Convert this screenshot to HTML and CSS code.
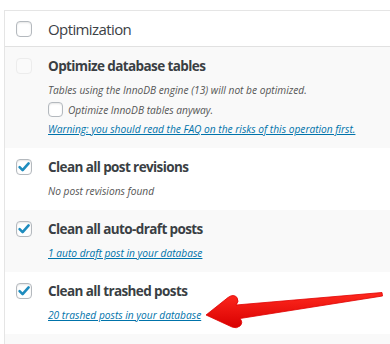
FILE: index.html
```html
<!DOCTYPE html>
<html>
<head>
<meta charset="utf-8">
<link rel="stylesheet" href="styles.css">
</head>
<body>
<div class="table">
  <div class="head">
    <span class="cb"></span>
    <span class="head-title">Optimization</span>
  </div>
  <div class="row alt">
    <span class="cb disabled"></span>
    <div class="content">
      <div class="title">Optimize database tables</div>
      <div class="desc">Tables using the InnoDB engine (13) will not be optimized.</div>
      <div class="desc inline"><span class="cb small"></span><span>Optimize InnoDB tables anyway.</span></div>
      <div class="desc"><a href="#">Warning: you should read the FAQ on the risks of this operation first.</a></div>
    </div>
  </div>
  <div class="row">
    <span class="cb checked"><svg viewBox="0 0 16 16"><path d="M3.6 8.2 L6.6 11.2 L12.6 4.4"/></svg></span>
    <div class="content">
      <div class="title">Clean all post revisions</div>
      <div class="desc">No post revisions found</div>
    </div>
  </div>
  <div class="row alt">
    <span class="cb checked"><svg viewBox="0 0 16 16"><path d="M3.6 8.2 L6.6 11.2 L12.6 4.4"/></svg></span>
    <div class="content">
      <div class="title">Clean all auto-draft posts</div>
      <div class="desc"><a href="#">1 auto draft post in your database</a></div>
    </div>
  </div>
  <div class="row">
    <span class="cb checked"><svg viewBox="0 0 16 16"><path d="M3.6 8.2 L6.6 11.2 L12.6 4.4"/></svg></span>
    <div class="content">
      <div class="title">Clean all trashed posts</div>
      <div class="desc"><a href="#">20 trashed posts in your database</a></div>
    </div>
  </div>
  <div class="row alt last"></div>
</div>
<svg class="arrow" width="390" height="344" viewBox="0 0 390 344">
  <defs>
    <linearGradient id="ag" x1="0" y1="0" x2="0" y2="1">
      <stop offset="0" stop-color="#ff2a1f"/>
      <stop offset="1" stop-color="#d80000"/>
    </linearGradient>
  </defs>
  <path d="M206 315 L228 297.5 Q233.5 293.5 237 297.5 Q239.5 301.5 236 305 L382 292.5 L382.5 296 L240 318.5 Q243.5 322.5 240 326 Q236.5 329 232 327 Z" fill="url(#ag)" stroke="#e00000" stroke-width="0.8" stroke-linejoin="round"/>
</svg>
</body>
</html>
```
FILE: styles.css
```css
html, body {
  margin: 0;
  padding: 0;
  background: #fff;
  overflow: hidden;
}
body {
  width: 390px;
  height: 344px;
  position: relative;
  font-family: "Open Sans", "Noto Sans", sans-serif;
  color: #32373c;
}
.table {
  margin: 10px -20px 0 4px;
  border-top: 1px solid #e5e5e5;
  border-left: 1px solid #e5e5e5;
}
.head {
  height: 35px;
  display: flex;
  align-items: center;
  border-bottom: 1px solid #e1e1e1;
  background: #fff;
}
.head .cb {
  margin: 1px 0 0 11px;
}
.head-title {
  margin-left: 16px;
  font-size: 15px;
  font-weight: 400;
  color: #3c4146;
  letter-spacing: -0.6px;
}
.cb {
  box-sizing: border-box;
  width: 16px;
  height: 16px;
  flex: none;
  border: 1px solid #b4b9be;
  border-radius: 4px;
  background: #fff;
  box-shadow: inset 0 1px 2px rgba(0,0,0,0.1);
  display: inline-block;
  position: relative;
}
.cb svg {
  position: absolute;
  left: -1px;
  top: -1px;
  width: 16px;
  height: 16px;
}
.cb svg path {
  fill: none;
  stroke: #1e8cbe;
  stroke-width: 2.6;
  stroke-linecap: round;
  stroke-linejoin: round;
}
.cb.disabled {
  border-color: #ececec;
  background: #fafafa;
  box-shadow: none;
}
.row {
  display: flex;
  align-items: flex-start;
  padding: 9px 0 11px;
  background: #fff;
}
.row.alt {
  background: #f9f9f9;
}
.row > .cb {
  margin: 2px 0 0 11px;
}
.row.last {
  height: 40px;
  padding: 0;
}
.content {
  margin-left: 16px;
  display: flex;
  flex-direction: column;
}
.title {
  font-size: 13.5px;
  line-height: 20px;
  font-weight: 700;
  color: #3a3f44;
  letter-spacing: -0.6px;
}
.desc {
  font-size: 10.2px;
  line-height: 16px;
  font-style: italic;
  color: #555;
  margin-top: 6px;
}
.row.alt .desc + .desc {
  margin-top: 3px;
}
.desc.inline {
  display: flex;
  align-items: center;
  height: 17px;
}
.desc .cb.small {
  width: 15px;
  height: 15px;
  margin: 0 5px 0 0;
}
.desc a {
  color: #0073aa;
  text-decoration: underline;
}
.arrow {
  position: absolute;
  left: 0;
  top: 0;
  pointer-events: none;
}
```
